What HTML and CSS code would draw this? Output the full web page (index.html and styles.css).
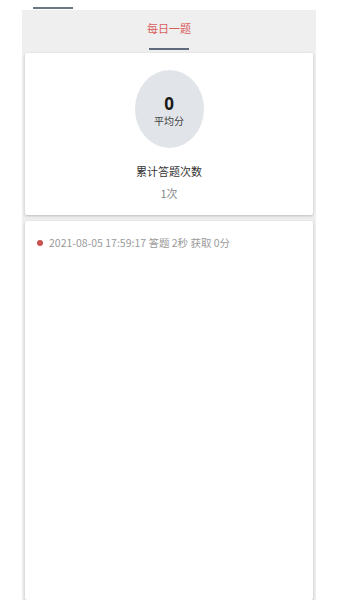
FILE: index.html
```html
<!DOCTYPE html>
<html lang="zh">
<head>
<meta charset="utf-8">
<link rel="stylesheet" href="styles.css">
</head>
<body>
<div class="topbar"><span class="top-ind"></span></div>
<div class="panel">
  <div class="tabs">
    <div class="tab active">每日一题</div>
  </div>
  <div class="card stats">
    <div class="circle">
      <div class="score">0</div>
      <div class="score-label">平均分</div>
    </div>
    <div class="count-title">累计答题次数</div>
    <div class="count-value">1次</div>
  </div>
  <div class="card records">
    <div class="record"><span class="dot"></span><span class="record-text">2021-08-05 17:59:17 答题 2秒 获取 0分</span></div>
  </div>
</div>
</body>
</html>
```
FILE: styles.css
```css
html, body {
  margin: 0;
  padding: 0;
  background: #ffffff;
  font-family: "Noto Sans CJK SC", "Noto Sans", sans-serif;
  height: 600px;
  overflow: hidden;
}
.topbar {
  height: 10px;
  padding-top: 7px;
  box-sizing: border-box;
}
.top-ind {
  display: block;
  margin-left: 33px;
  width: 40px;
  height: 2px;
  background: #6b7584;
}
.panel {
  margin-left: 22px;
  width: 294px;
  height: 590px;
  background: #efefef;
  padding: 0 3px;
  box-sizing: border-box;
  display: flex;
  flex-direction: column;
}
.tabs {
  height: 43px;
  display: flex;
  justify-content: center;
  flex-shrink: 0;
}
.tab {
  font-size: 11px;
  color: #d9605e;
  padding-top: 10px;
  width: 40px;
  text-align: center;
  white-space: nowrap;
  height: 28px;
  border-bottom: 2px solid #5f6b7a;
  box-sizing: content-box;
  line-height: 16px;
  display: flex;
  justify-content: center;
}
.card {
  background: #ffffff;
  border-radius: 2px;
  box-shadow: 0 1px 3px rgba(0,0,0,0.22);
}
.stats {
  height: 162px;
  flex-shrink: 0;
  display: flex;
  flex-direction: column;
  align-items: center;
  box-sizing: border-box;
  padding-top: 17px;
}
.circle {
  width: 69px;
  height: 78px;
  border-radius: 50%;
  background: #e1e5e9;
  display: flex;
  flex-direction: column;
  align-items: center;
  justify-content: center;
}
.score {
  font-size: 17px;
  font-weight: bold;
  color: #1a1a1a;
  line-height: 20px;
  margin-top: 4px;
  font-family: "Noto Sans", sans-serif;
}
.score-label {
  font-size: 10px;
  color: #444;
  line-height: 14px;
}
.count-title {
  margin-top: 15px;
  font-size: 11px;
  color: #333;
  line-height: 16px;
}
.count-value {
  margin-top: 6px;
  font-size: 11px;
  color: #888;
  line-height: 16px;
}
.records {
  margin-top: 6px;
  flex: 1;
  padding: 14px 0 0 12px;
}
.record {
  display: flex;
  align-items: center;
  height: 16px;
}
.dot {
  width: 6px;
  height: 6px;
  border-radius: 50%;
  background: #c9524f;
  margin-right: 6px;
}
.record-text {
  font-size: 10.5px;
  color: #9a9a9a;
  line-height: 16px;
}
```
